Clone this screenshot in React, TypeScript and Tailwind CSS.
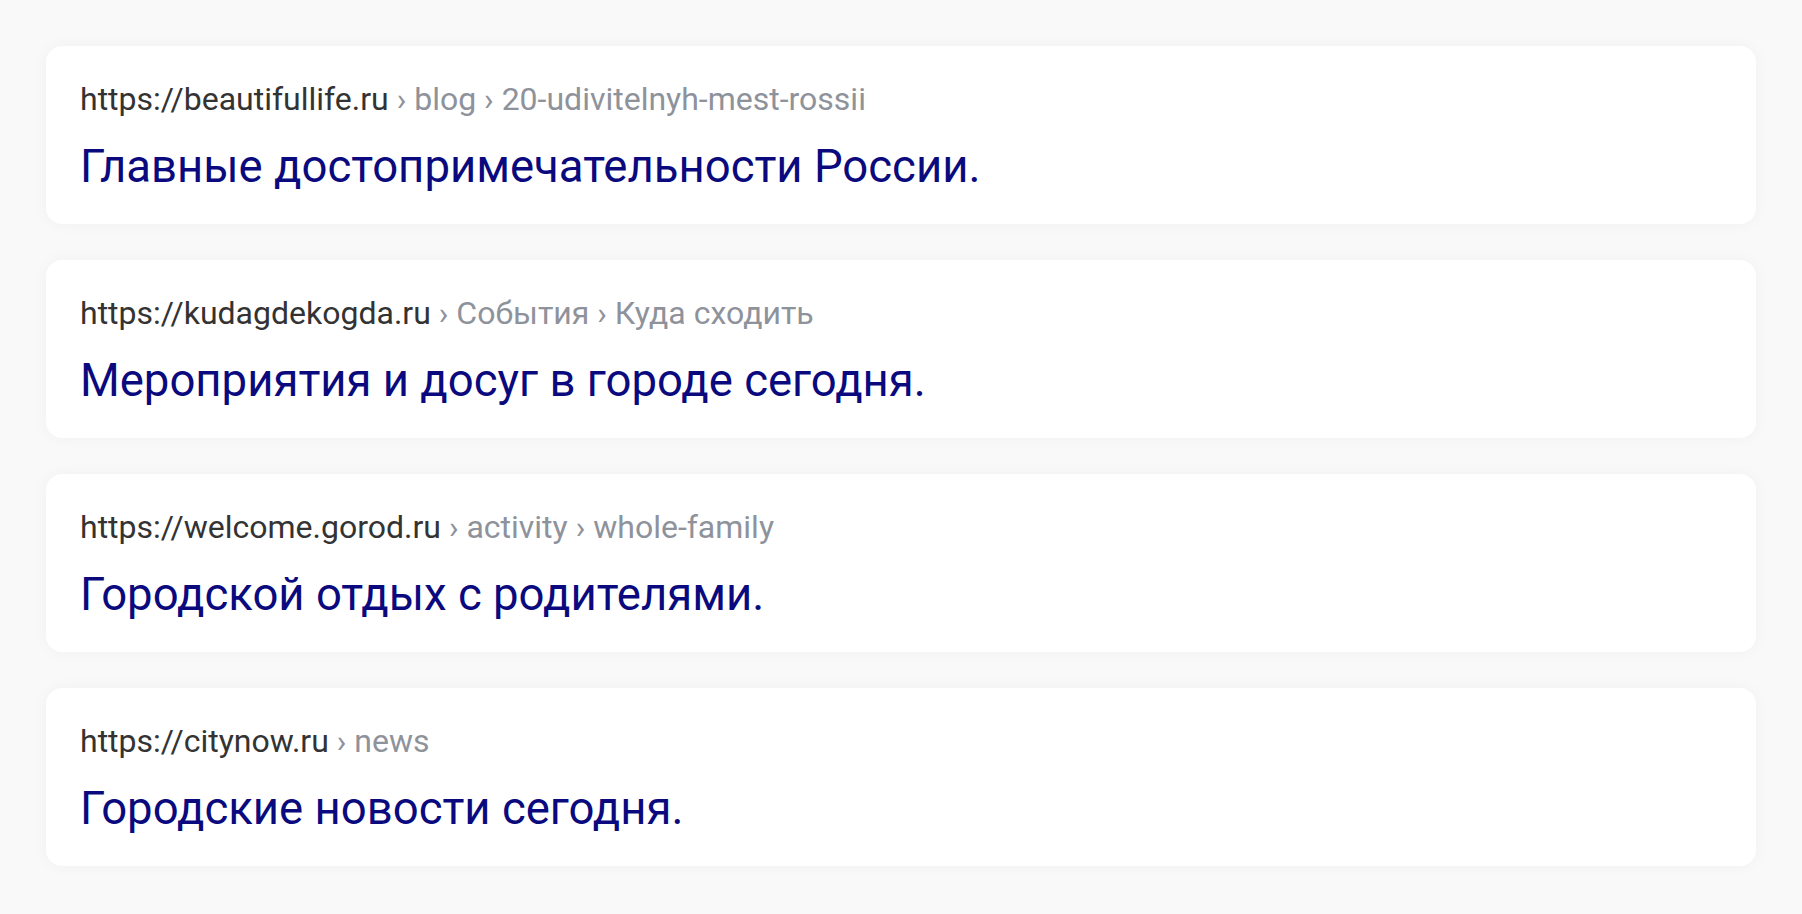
import React from "react";

const items = [
  { domain: "https://beautifullife.ru", path: ["blog", "20-udivitelnyh-mest-rossii"], title: "Главные достопримечательности России." },
  { domain: "https://kudagdekogda.ru", path: ["События", "Куда сходить"], title: "Мероприятия и досуг в городе сегодня." },
  { domain: "https://welcome.gorod.ru", path: ["activity", "whole-family"], title: "Городской отдых с родителями." },
  { domain: "https://citynow.ru", path: ["news"], title: "Городские новости сегодня." },
];

export default function App() {
  return (
    <div className="min-h-[914px] bg-[#f9f9f9] p-[46px] flex flex-col gap-[36px]" style={{ fontFamily: "Roboto, 'Noto Sans', sans-serif" }}>
      {items.map((it) => (
        <div key={it.domain} className="bg-white rounded-[16px] shadow-[0_0_16px_rgba(0,0,0,0.04)] pl-[34px] pr-8 pt-[33px] pb-[30px] flex flex-col gap-[21px]">
          <div className="text-[32px] leading-[40px] text-[#333333] whitespace-nowrap">
            {it.domain}
            {it.path.map((p) => (
              <span key={p} className="text-[#8e929b]"> › {p}</span>
            ))}
          </div>
          <div className="text-[45.5px] leading-[54px] text-[#0a0a7e] whitespace-nowrap">{it.title}</div>
        </div>
      ))}
    </div>
  );
}
